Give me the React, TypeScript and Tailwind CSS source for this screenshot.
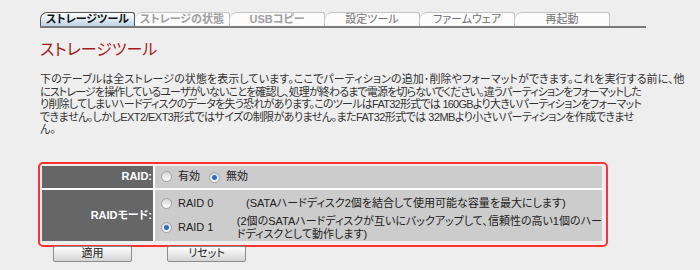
const jp = "font-['Liberation_Sans','Noto_Sans_CJK_JP',sans-serif]"

const tabs = ["ストレージツール", "ストレージの状態", "USBコピー", "設定ツール", "ファームウェア", "再起動"]

function Radio({ checked = false }: { checked?: boolean }) {
  return (
    <span className="inline-flex h-[11px] w-[11px] shrink-0 items-center justify-center rounded-full border border-[#a0a0a0] bg-gradient-to-b from-[#d6d6d6] to-[#ffffff]">
      {checked && <span className="h-[5px] w-[5px] rounded-full bg-[#2b6cc4]" />}
    </span>
  )
}

function Btn({ label }: { label: string }) {
  return (
    <div className="flex h-[16px] w-[79px] items-center justify-center rounded-[2px] border border-[#8c8c8c] bg-gradient-to-b from-[#ffffff] to-[#d4d4d4] text-[11px] leading-none text-[#222]">
      {label}
    </div>
  )
}

export default function App() {
  return (
    <div className={`h-[270px] w-[700px] overflow-hidden bg-[#eeeeee] pl-[40px] pt-[12px] ${jp} [font-feature-settings:'palt']`}>
      {/* tabs */}
      <div className="flex w-[606px] border-b-2 border-[#7a7a7a]">
        {tabs.map((t, i) =>
          i === 0 ? (
            <div
              key={t}
              className="flex h-[14px] w-[95px] items-center justify-center rounded-tl-[7px] rounded-tr-[3px] border-l border-r border-t border-[#555] bg-gradient-to-b from-[#ffffff] to-[#bfd3e6] text-[11px] font-bold leading-none text-[#111]"
            >
              {t}
            </div>
          ) : (
            <div
              key={t}
              className={`flex h-[14px] w-[95px] items-center justify-center rounded-tl-[7px] rounded-tr-[3px] border-r border-t border-[#c4c4c4] bg-[#fbfbfb] text-[11px] leading-none ${i < 3 ? "font-semibold text-[#a0a0a0]" : "text-[#707070]"}`}
            >
              {t}
            </div>
          )
        )}
      </div>

      <h1 className="mt-[12px] text-[16px] leading-[20px] text-[#a31c1c]">ストレージツール</h1>

      {/* intro text, one div per line as it breaks in the screenshot */}
      <div className="mt-[13px] whitespace-nowrap text-[11px] leading-[12.5px] text-[#333]">
        <div className="tracking-[0.08px]">下のテーブルは全ストレージの状態を表示しています。ここでパーティションの追加･削除やフォーマットができます。これを実行する前に、他</div>
        <div className="tracking-[-0.86px]">にストレージを操作しているユーザがいないことを確認し、処理が終わるまで電源を切らないでください。違うパーティションをフォーマットした</div>
        <div className="tracking-[-0.75px]">り削除してしまいハードディスクのデータを失う恐れがあります。このツールはFAT32形式では 160GBより大きいパーティションをフォーマット</div>
        <div className="tracking-[-0.55px]">できません。しかしEXT2/EXT3形式ではサイズの制限がありません。またFAT32形式では 32MBより小さいパーティションを作成できませ</div>
        <div>ん。</div>
      </div>

      {/* settings table */}
      <div className="ml-[-2px] mt-[26px] w-[570px] rounded-[5px] border-2 border-[#ff3232] pb-[4px] pl-[2px] pr-[4px] pt-[2px]">
        <div className="grid grid-cols-[111px_447px] gap-x-[2px] gap-y-[2px] bg-white text-[11px] text-[#222]">
          <div className="flex h-[22px] items-center justify-end bg-[#666666] pr-[1px] font-bold text-white">RAID:</div>
          <div className="flex h-[22px] items-center bg-[#cccccc] pl-[6px]">
            <Radio />
            <span className="ml-[6px]">有効</span>
            <span className="ml-[9px]"><Radio checked /></span>
            <span className="ml-[6px]">無効</span>
          </div>

          <div className="flex h-[51px] items-center justify-end bg-[#666666] pr-[1px] font-bold text-white">RAIDモード:</div>
          <div className="flex h-[51px] flex-col gap-[5px] bg-[#cccccc] pl-[6px] pt-[7px] leading-[13px]">
            <div className="flex items-center">
              <Radio />
              <span className="ml-[6px] w-[68px]">RAID 0</span>
              <span>(SATAハードディスク2個を結合して使用可能な容量を最大にします)</span>
            </div>
            <div className="flex items-center">
              <Radio checked />
              <span className="ml-[6px] w-[68px]">RAID 1</span>
              <span className="whitespace-nowrap">
                (2個のSATAハードディスクが互いにバックアップして、信頼性の高い1個のハー
                <br />
                ドディスクとして動作します)
              </span>
            </div>
          </div>
        </div>
      </div>

      <div className="ml-[13px] mt-[-1px] flex gap-[35px]">
        <Btn label="適用" />
        <Btn label="リセット" />
      </div>
    </div>
  )
}
